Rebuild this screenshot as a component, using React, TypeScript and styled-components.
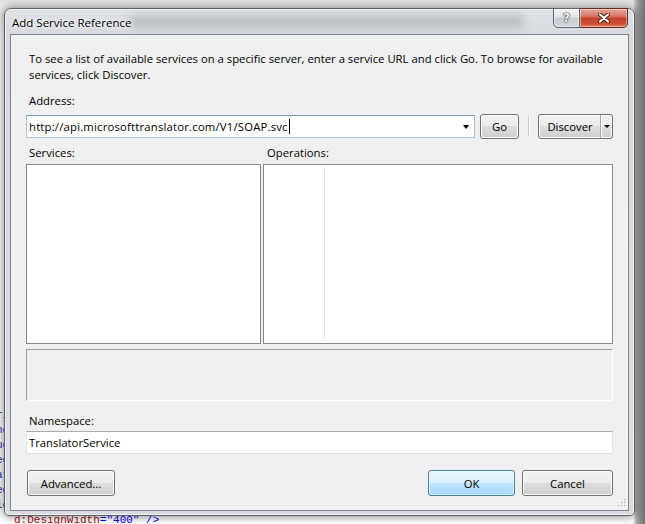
import React from 'react';
import styled, { createGlobalStyle } from 'styled-components';

const Global = createGlobalStyle`
  html, body { margin: 0; padding: 0; }
  body {
    width: 645px;
    height: 524px;
    overflow: hidden;
    background: #ffffff;
    font-family: "Open Sans", "Noto Sans", sans-serif;
  }
`;

const Desktop = styled.div`
  position: relative;
  width: 645px;
  height: 524px;
  overflow: hidden;
  box-sizing: border-box;
  padding: 8px 0 0 4px;
  background:
    linear-gradient(to right, rgba(0,0,0,0) 633px, #b0b0b0 636px, #8c8c8c 640px, #727272 645px),
    linear-gradient(#e2e2e2 0, #efefef 8px, #ffffff 40px);
`;

const CodeBottom = styled.div`
  position: absolute;
  left: 14px;
  top: 513px;
  font-family: "Liberation Mono", "DejaVu Sans Mono", monospace;
  font-size: 11px;
  line-height: 14px;
  white-space: pre;
`;

const CodeLeft = styled.div`
  position: absolute;
  left: -4px;
  top: 408px;
  font-family: "Liberation Mono", "DejaVu Sans Mono", monospace;
  font-size: 11px;
  line-height: 15px;
  color: #2a2ad0;
  white-space: pre;
`;

const Tok = styled.span<{ $c: string }>`
  color: ${p => p.$c};
`;

const Window = styled.div`
  position: relative;
  z-index: 1;
  width: 631px;
  height: 508px;
  box-sizing: border-box;
  border: 1px solid #5d6168;
  border-radius: 7px 7px 5px 5px;
  background: linear-gradient(#dfe2e6 0, #d6dadf 26px, #d9dde2 100%);
  box-shadow: 0 0 9px 1px rgba(0, 0, 0, 0.45), inset 0 0 0 1px rgba(255, 255, 255, 0.6);
  display: flex;
  flex-direction: column;
`;

const TitleBar = styled.div`
  position: relative;
  height: 25px;
  display: flex;
  align-items: center;
  padding-left: 7px;
  &::before {
    content: "";
    position: absolute;
    left: 125px;
    right: 110px;
    top: 7px;
    height: 11px;
    background: rgba(90, 90, 90, 0.26);
    filter: blur(5px);
  }
`;

const Title = styled.div`
  position: relative;
  font-size: 11.5px;
  color: #000;
  padding-top: 2px;
  text-shadow: 0 0 6px rgba(255, 255, 255, 0.95), 0 0 3px rgba(255, 255, 255, 0.95);
`;

const CaptionButtons = styled.div`
  display: flex;
  margin-left: auto;
  margin-right: 6px;
  margin-top: -1px;
  align-self: flex-start;
  position: relative;
`;

const CaptionButton = styled.div<{ $variant: 'help' | 'close' }>`
  width: ${p => (p.$variant === 'close' ? 48 : 27)}px;
  height: 20px;
  box-sizing: border-box;
  border: 1px solid ${p => (p.$variant === 'close' ? '#6b2a20' : '#5f646c')};
  border-left-width: ${p => (p.$variant === 'close' ? 0 : 1)}px;
  border-radius: ${p => (p.$variant === 'close' ? '0 0 5px 0' : '0 0 0 5px')};
  background: ${p =>
    p.$variant === 'close'
      ? 'linear-gradient(#e8a595 0, #d9786a 40%, #c5422d 52%, #cf4e33 80%, #e07a55 100%)'
      : 'linear-gradient(#f3f4f6 0, #e0e3e7 45%, #c9cdd3 52%, #d2d6dc 100%)'};
  box-shadow: inset 0 0 0 1px rgba(255, 255, 255, 0.45);
  display: flex;
  align-items: center;
  justify-content: center;
`;

const HelpGlyph = styled.span`
  font-family: "DejaVu Sans", sans-serif;
  font-weight: bold;
  font-size: 12px;
  line-height: 12px;
  color: #f4f4f4;
  text-shadow: 0 0 1px #3a3a3a, 0 0 1px #3a3a3a, 0 0 2px #555;
`;

const Client = styled.div`
  margin: 0 5px 4px 5px;
  height: 477px;
  box-sizing: border-box;
  border: 1px solid #7c8591;
  background: #f0f0f0;
  padding: 16px 15px 14px 15px;
  display: flex;
  flex-direction: column;
  position: relative;
  font-size: 11.3px;
  line-height: 16px;
  color: #000;
`;

const Intro = styled.p`
  margin: 0 0 0 3px;
  line-height: 16px;
  white-space: nowrap;
`;

const Label = styled.div<{ $top: number }>`
  margin: ${p => p.$top}px 0 0 3px;
  height: 16px;
`;

const AddressRow = styled.div`
  margin-top: 5px;
  height: 25px;
  display: flex;
  align-items: center;
`;

const Combo = styled.div`
  width: 449px;
  height: 23px;
  box-sizing: border-box;
  border: 1px solid #a4c3e0;
  border-top-color: #6e9bc4;
  background: #fff;
  display: flex;
  align-items: center;
  padding-left: 2px;
`;

const ComboText = styled.span`
  white-space: nowrap;
  letter-spacing: 0.2px;
`;

const Caret = styled.span`
  display: inline-block;
  width: 1px;
  height: 15px;
  background: #000;
  margin-left: 1px;
`;

const DropArrow = styled.span`
  margin-left: auto;
  width: 17px;
  display: flex;
  justify-content: center;
  align-items: center;
  &::after {
    content: "";
    border-left: 3.5px solid transparent;
    border-right: 3.5px solid transparent;
    border-top: 4px solid #000;
  }
`;

const Button = styled.button<{ $w: number; $default?: boolean }>`
  width: ${p => p.$w}px;
  height: 100%;
  box-sizing: border-box;
  margin: 0;
  padding: 0;
  font-family: inherit;
  font-size: 11.3px;
  color: #000;
  border: 1px solid ${p => (p.$default ? '#3c7fb1' : '#707070')};
  border-radius: 3px;
  background: ${p =>
    p.$default
      ? 'linear-gradient(#eaf6fd 0, #d9f0fc 50%, #bee6fd 50%, #a7d9f5 100%)'
      : 'linear-gradient(#f2f2f2 0, #ebebeb 50%, #dddddd 50%, #cfcfcf 100%)'};
  box-shadow: inset 0 0 0 1px ${p => (p.$default ? 'rgba(255,255,255,0.6)' : '#fcfcfc')};
  display: flex;
  align-items: center;
  justify-content: center;
`;

const GoButton = styled(Button)`
  margin-left: 5px;
`;

const Separator = styled.div`
  width: 1px;
  height: 21px;
  margin: 0 9px;
  background: #c9c9c9;
  box-shadow: 1px 0 0 #ffffff;
`;

const SplitButton = styled(Button)`
  justify-content: flex-start;
`;

const SplitMain = styled.span`
  flex: 1;
  text-align: center;
  padding-left: 1px;
`;

const SplitArrow = styled.span`
  width: 12px;
  height: 100%;
  box-sizing: border-box;
  border-left: 1px solid #a8a8a8;
  box-shadow: inset 1px 0 0 #fbfbfb;
  display: flex;
  align-items: center;
  justify-content: center;
  &::after {
    content: "";
    border-left: 3px solid transparent;
    border-right: 3px solid transparent;
    border-top: 3px solid #000;
  }
`;

const LabelsRow = styled.div`
  margin-top: 6px;
  height: 16px;
  display: flex;
`;

const ColLabel = styled.div<{ $w?: number }>`
  padding-left: ${p => (p.$w ? 3 : 4)}px;
  ${p => (p.$w ? `width: ${p.$w}px;` : 'flex: 1;')}
  box-sizing: border-box;
`;

const ListsRow = styled.div`
  margin-top: 3px;
  height: 180px;
  display: flex;
  gap: 2px;
`;

const ListBox = styled.div<{ $w?: number }>`
  ${p => (p.$w ? `width: ${p.$w}px;` : 'flex: 1;')}
  box-sizing: border-box;
  border: 1px solid #828790;
  background: #fff;
  display: flex;
  padding: 1px 0;
`;

const OpsLeftPane = styled.div`
  width: 60px;
  border-right: 1px solid #dde8f5;
  margin: 1px 0;
`;

const Description = styled.div`
  margin-top: 5px;
  height: 52px;
  box-sizing: border-box;
  border: 1px solid #ffffff;
  border-top-color: #a0a0a0;
  border-left-color: #a0a0a0;
  background: #f0f0f0;
`;

const TextBox = styled.div`
  margin-top: 2px;
  height: 23px;
  box-sizing: border-box;
  border: 1px solid #dfe3e9;
  border-top-color: #abadb3;
  background: #fff;
  padding-left: 2px;
  display: flex;
  align-items: center;
`;

const ButtonsRow = styled.div`
  margin-top: 16px;
  height: 26px;
  display: flex;
  align-items: stretch;
  gap: 7px;
`;

const AdvancedButton = styled(Button)`
  margin-left: 1px;
  margin-right: auto;
`;

const Grip = styled.svg`
  position: absolute;
  right: 2px;
  bottom: 3px;
`;

const CloseIcon = () => (
  <svg width="14" height="10" viewBox="0 0 14 10">
    <path d="M3 1.5 L11 8.5 M11 1.5 L3 8.5" stroke="#4a1a12" strokeWidth="4" strokeLinecap="round" fill="none" />
    <path d="M3 1.5 L11 8.5 M11 1.5 L3 8.5" stroke="#ffffff" strokeWidth="2.2" strokeLinecap="round" fill="none" />
  </svg>
);

const GripIcon = () => (
  <Grip width="8" height="8" viewBox="0 0 8 8">
    {[
      [6, 0],
      [3, 3],
      [6, 3],
      [0, 6],
      [3, 6],
      [6, 6],
    ].map(([x, y]) => (
      <g key={`${x}-${y}`}>
        <rect x={x + 0.7} y={y + 0.7} width="1.3" height="1.3" fill="#ffffff" />
        <rect x={x} y={y} width="1.3" height="1.3" fill="#a9a9a9" />
      </g>
    ))}
  </Grip>
);

export default function App() {
  return (
    <>
      <Global />
      <Desktop>
        <CodeLeft>
          {'ri\nnc\nuc\nec\nat\ned\nie'}
        </CodeLeft>
        <CodeBottom>
          <Tok $c="#a31515">d:DesignWidth</Tok>
          <Tok $c="#0000ff">=</Tok>
          <Tok $c="#0000ff">"400"</Tok>
          <Tok $c="#0000ff"> /&gt;</Tok>
        </CodeBottom>
        <Window>
          <TitleBar>
            <Title>Add Service Reference</Title>
            <CaptionButtons>
              <CaptionButton $variant="help">
                <HelpGlyph>?</HelpGlyph>
              </CaptionButton>
              <CaptionButton $variant="close">
                <CloseIcon />
              </CaptionButton>
            </CaptionButtons>
          </TitleBar>
          <Client>
            <Intro>
              To see a list of available services on a specific server, enter a service URL and click Go. To browse for available
              <br />
              services, click Discover.
            </Intro>
            <Label $top={10}>Address:</Label>
            <AddressRow>
              <Combo>
                <ComboText>http://api.microsofttranslator.com/V1/SOAP.svc</ComboText>
                <Caret />
                <DropArrow />
              </Combo>
              <GoButton $w={39}>Go</GoButton>
              <Separator />
              <SplitButton $w={75}>
                <SplitMain>Discover</SplitMain>
                <SplitArrow />
              </SplitButton>
            </AddressRow>
            <LabelsRow>
              <ColLabel $w={237}>Services:</ColLabel>
              <ColLabel>Operations:</ColLabel>
            </LabelsRow>
            <ListsRow>
              <ListBox $w={235} />
              <ListBox>
                <OpsLeftPane />
              </ListBox>
            </ListsRow>
            <Description />
            <Label $top={12}>Namespace:</Label>
            <TextBox>TranslatorService</TextBox>
            <ButtonsRow>
              <AdvancedButton $w={88}>Advanced...</AdvancedButton>
              <Button $w={87} $default>OK</Button>
              <Button $w={91}>Cancel</Button>
            </ButtonsRow>
            <GripIcon />
          </Client>
        </Window>
      </Desktop>
    </>
  );
}
